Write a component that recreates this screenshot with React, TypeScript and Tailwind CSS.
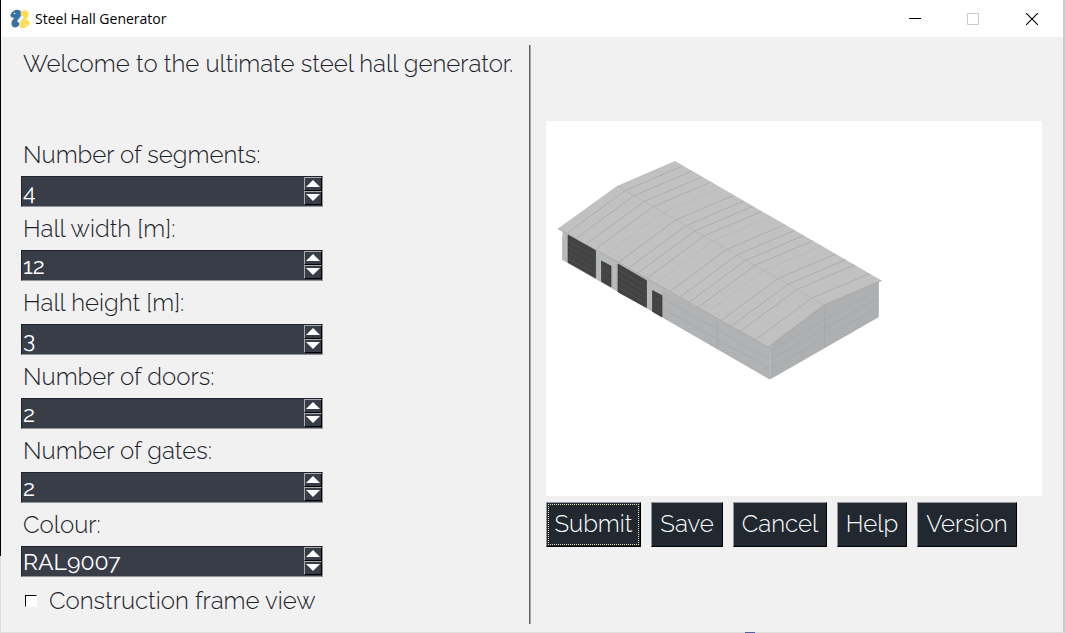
import { useState } from "react";

type FieldProps = {
  id: string;
  label: string;
  value: string;
  onChange: (value: string) => void;
  onStep: (direction: 1 | -1) => void;
};

const spinButton =
  "flex h-[14px] w-[18px] items-start justify-center border border-t-[#a9abb0] border-l-[#a9abb0] border-r-black border-b-black bg-[#393d47] pt-[2px]";

function SpinField({ id, label, value, onChange, onStep }: FieldProps) {
  return (
    <div>
      <label htmlFor={id} className="block h-[43px] pl-[2px] text-2xl leading-[43px]">
        {label}
      </label>
      <div className="flex h-[31px] w-[302px] border border-t-[#1f242b] border-l-[#1f242b] border-r-[#92949c] border-b-[#92949c] bg-[#393d47]">
        <input
          id={id}
          value={value}
          onChange={(e) => onChange(e.target.value)}
          className="min-w-0 flex-1 bg-transparent px-px text-[23px] leading-6 font-normal text-white outline-none"
        />
        <div className="flex flex-col">
          <button type="button" aria-label={`Increase ${label}`} onClick={() => onStep(1)} className={spinButton}>
            <svg viewBox="0 0 14 7" className="h-[7px] w-[14px]" fill="#fff">
              <path d="M7 0 14 7H0Z" />
            </svg>
          </button>
          <button type="button" aria-label={`Decrease ${label}`} onClick={() => onStep(-1)} className={spinButton}>
            <svg viewBox="0 0 14 7" className="h-[7px] w-[14px]" fill="#fff">
              <path d="M0 0H14L7 7Z" />
            </svg>
          </button>
        </div>
      </div>
    </div>
  );
}

function SnakesLogo() {
  return (
    <svg viewBox="0 0 20 20" className="h-5 w-5">
      <path
        d="M3 2.500C5 0 10 0 11 3C12 6 10.500 8 8.500 10C7 12 7 13 8 13C10 13 10 17 7 18C3 19.500 1 16.500 1.500 13.500C2 11.500 3 10 4.500 9C3 8.500 1 9 .5 7C0 5 1.500 4 3 2.500Z"
        fill="#3673a5"
      />
      <path
        d="M12 2C15 0 19 2 18.500 6C18 9 16.500 10 15.500 11C17 11.500 19 11 19.500 13C20 15 19 16 17 17C15 20 10 20 9.500 17C9 14 10.500 12 12.500 10C14 8 14 7 12 7C10 7 10 3 12 2Z"
        fill="#ffdc55"
      />
      <circle cx="4.500" cy="4.500" r=".8" fill="#fff" />
      <circle cx="15.500" cy="15.500" r=".8" fill="#fff" />
    </svg>
  );
}

const ridgeJoints = [625, 634, 644, 653, 663, 676, 686, 695, 704, 713, 727, 737, 746, 755, 764, 778, 788, 797, 812];
const faintJoints = [663, 713, 764];

function HallPreview() {
  return (
    <svg viewBox="546 121 496 375" className="block w-full bg-white" role="img" aria-label="Steel hall preview">
      <path d="M562.500 229V260L770 379.500V345Z" fill="#b7b9bb" />
      <path d="M662 290V317L770 379.500V345Z" fill="#b0b2b4" />
      <path d="M770 379.500V345L824 303L879 280V317Z" fill="#adafb1" />
      <g stroke="#a2a4a6" strokeWidth=".6" fill="none">
        <path d="M662 298 770 360M662 308 770 369M770 351 879 289M770 360 879 298M770 369 879 307M824.500 305V348M717 321V349" />
        <path d="M770 345V379M878.500 283V317" stroke="#bcbdbe" strokeWidth="1" />
        <path d="M562.500 236V260M596 252V278M612 264V287M617 264V291" stroke="#a4aaad" />
      </g>
      <path d="M558 228.500 617 186 675 161 881.500 280.500 824 305 768 347Z" fill="#c1c1c1" />
      <path d="M558 228.500 768 347 770 348M768 347 824 305 881.500 280.500" fill="none" stroke="#aaa" strokeWidth="1" />
      <path d="M617 186 824 305" stroke="#b4b4b4" strokeWidth=".8" />
      {ridgeJoints.map((x) => {
        const y = 186 + ((x - 617) * 119) / 207;
        return (
          <polyline
            key={x}
            points={`${x - 57},${y + 42} ${x},${y} ${x + 57.5},${y - 24.5}`}
            fill="none"
            stroke={faintJoints.includes(x) ? "#b8b8b8" : "#a8a8a8"}
            strokeWidth=".8"
          />
        );
      })}
      <g fill="#434343" stroke="#303030" strokeWidth=".6">
        <path d="M568 235 595.500 250.500V278L568 262.500Z" />
        <path d="M618 264 646.500 280.500V307.500L618 292Z" />
        <path d="M601.500 261 611 266V287L601.500 281.500Z" />
        <path d="M652.500 290.500 662 295.500V317L652.500 311.500Z" />
      </g>
      <path
        d="M568 241 595 256M568 247 595 262M568 253 595 268M568 258 595 273M618 270 646 286M618 276 646 292M618 282 646 298M618 287 646 303M602 268 611 273M602 275 611 280M653 297 662 302M653 304 662 309"
        stroke="#545454"
        strokeWidth=".6"
      />
    </svg>
  );
}

const colours = ["RAL9006", "RAL9007", "RAL7016"];

const specs = [
  { key: "segments", label: "Number of segments:" },
  { key: "width", label: "Hall width [m]:" },
  { key: "height", label: "Hall height [m]:" },
  { key: "doors", label: "Number of doors:" },
  { key: "gates", label: "Number of gates:" },
  { key: "colour", label: "Colour:" },
];

const initial: Record<string, string> = {
  segments: "4",
  width: "12",
  height: "3",
  doors: "2",
  gates: "2",
  colour: "RAL9007",
};

const actionButton =
  "h-[45px] border border-t-[#92959a] border-l-[#92959a] border-r-black border-b-black bg-[#212830] text-2xl leading-6 text-white";

export default function App() {
  const [values, setValues] = useState(initial);
  const [frameView, setFrameView] = useState(false);

  const set = (key: string, value: string) => setValues((v) => ({ ...v, [key]: value }));
  const step = (key: string, direction: 1 | -1) => {
    if (key === "colour") {
      const next = (colours.indexOf(values.colour) + direction + colours.length) % colours.length;
      set(key, colours[next]);
    } else {
      set(key, String(Math.max(0, Number(values[key]) + direction)));
    }
  };

  return (
    <div className="relative flex min-h-screen flex-col border-r-2 border-b border-l border-r-[#c9c9c9] border-b-[#dedede] border-l-[#dedede] bg-[#f1f1f1] font-['Raleway','Open_Sans',sans-serif] font-light text-[#1b222a]">
      <div className="absolute top-0 -left-px h-[88%] w-px bg-black" />
      <div className="absolute -bottom-px left-[70%] ml-px h-px w-[10px] bg-[#5560a0]" />
      <header className="flex h-[37px] items-center bg-white pr-px pl-[9px] font-['Open_Sans',sans-serif] font-normal text-black">
        <SnakesLogo />
        <h1 className="ml-[5px] flex-1 text-[14px] leading-5">Steel Hall Generator</h1>
        <div className="flex">
          <button type="button" aria-label="Minimize" className="flex h-9 w-[58px] items-center justify-center">
            <svg viewBox="0 0 12 12" className="h-3 w-3">
              <path d="M0 5.500H12" stroke="#000" />
            </svg>
          </button>
          <button type="button" aria-label="Maximize" disabled className="flex h-9 w-[58px] items-center justify-center">
            <svg viewBox="0 0 12 12" className="h-3 w-3" fill="none">
              <path d="M.5.5H11.500V11.500H.5Z" stroke="#ccc" />
            </svg>
          </button>
          <button type="button" aria-label="Close" className="flex h-9 w-[60px] items-center justify-center">
            <svg viewBox="0 0 12 12" className="h-3 w-3">
              <path d="M0 0 12 12M12 0 0 12" stroke="#000" strokeWidth="1.100" />
            </svg>
          </button>
        </div>
      </header>

      <main className="grid flex-1 grid-cols-[508fr_2px_511fr] pt-2 pr-[21px] pb-2 pl-5">
        <form className="flex flex-col" onSubmit={(e) => e.preventDefault()}>
          <p className="pl-[2px] text-2xl leading-[38px] whitespace-nowrap">
            Welcome to the ultimate steel hall generator.
          </p>
          <div className="mt-[50px]">
            {specs.map(({ key, label }) => (
              <SpinField
                key={key}
                id={key}
                label={label}
                value={values[key]}
                onChange={(v) => set(key, v)}
                onStep={(d) => step(key, d)}
              />
            ))}
          </div>
          <label className="mt-2 flex items-center gap-3 pl-1 text-2xl leading-8">
            <input
              type="checkbox"
              checked={frameView}
              onChange={(e) => setFrameView(e.target.checked)}
              className="h-3 w-3 appearance-none border border-t-black border-l-black border-r-white border-b-white bg-white checked:bg-[#212830]"
            />
            Construction frame view
          </label>
        </form>

        <div className="border-r border-l border-r-[#a5a9ad] border-l-[#5c636b]" />

        <section className="flex flex-col justify-center pb-[2px] pl-[15px]">
          <HallPreview />
          <div className="mt-[6px] flex flex-wrap gap-[10px]">
            <button type="button" className={`${actionButton} w-[95px] p-px`}>
              <span className="flex h-full items-center justify-center border border-dotted border-[#dfe0b0]">Submit</span>
            </button>
            <button type="button" className={`${actionButton} w-[72px]`}>Save</button>
            <button type="button" className={`${actionButton} w-[94px]`}>Cancel</button>
            <button type="button" className={`${actionButton} w-[70px]`}>Help</button>
            <button type="button" className={`${actionButton} w-[100px]`}>Version</button>
          </div>
        </section>
      </main>
    </div>
  );
}
